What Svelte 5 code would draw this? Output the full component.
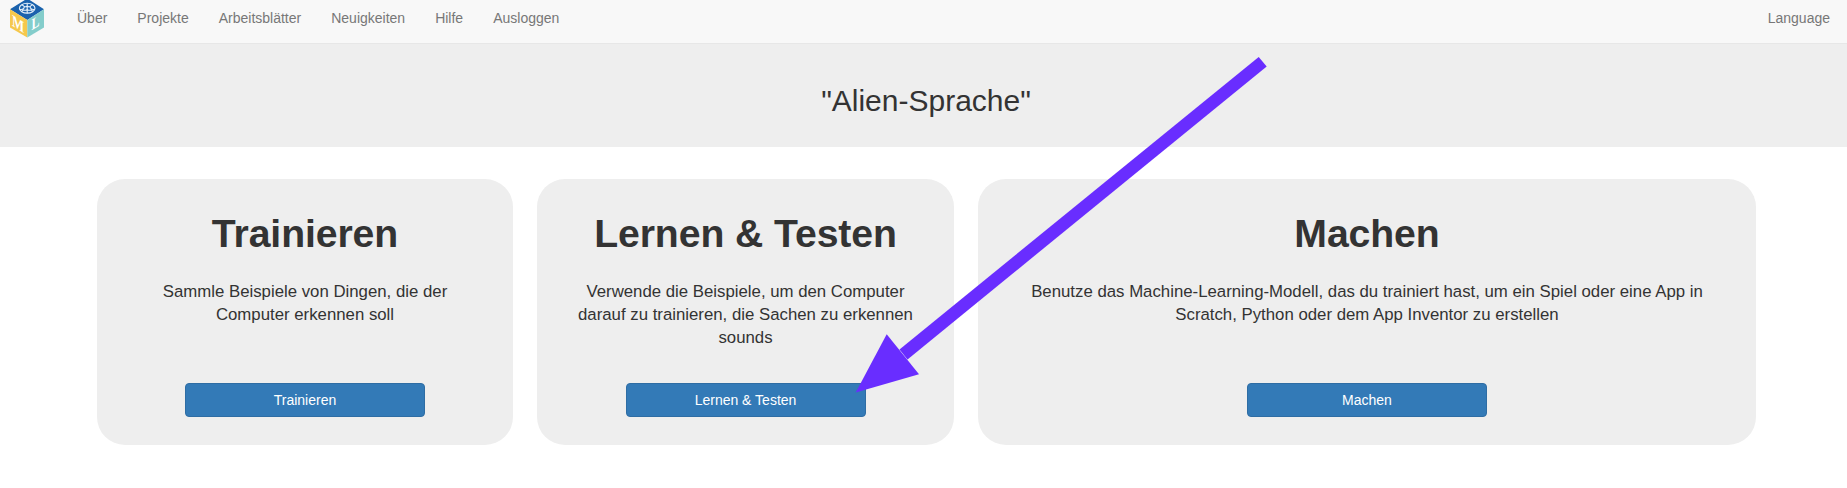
<script>
  const links = ['Über', 'Projekte', 'Arbeitsblätter', 'Neuigkeiten', 'Hilfe', 'Ausloggen'];
  const cards = [
    { title: 'Trainieren', text: 'Sammle Beispiele von Dingen, die der Computer erkennen soll' },
    { title: 'Lernen & Testen', text: 'Verwende die Beispiele, um den Computer darauf zu trainieren, die Sachen zu erkennen sounds' },
    { title: 'Machen', text: 'Benutze das Machine-Learning-Modell, das du trainiert hast, um ein Spiel oder eine App in Scratch, Python oder dem App Inventor zu erstellen' }
  ];
</script>

<div class="page">
  <nav>
    <svg class="logo" width="36" height="40" viewBox="9 -1 36 40" aria-hidden="true">
      <path d="M27.3 -1.5 44 9.3 27.3 20 10 9.3Z" fill="#1b62ad" />
      <path d="M10 9.3 27.3 20V37.4L10 27.5Z" fill="#f5c84c" />
      <path d="M44 9.3 27.3 20V37.4L44 27.5Z" fill="#84cdcb" />
      <g fill="none" stroke="#e3effa" stroke-width="1.1">
        <ellipse cx="27.2" cy="8.2" rx="7.8" ry="4.9" />
        <path d="M27.2 3.2v10M22 5q3 1 2 3t-4.5 1.2M32.4 5q-3 1-2 3t4.5 1.2M22 11.7q0-2 2.5-1.5t2.7-1.6M32.4 11.7q0-2-2.5-1.5t-2.7-1.6M24.3 6.4q1.5.8 2.9-.4 1.4 1.2 2.9.4" />
      </g>
      <text class="letter" transform="matrix(.78 .5 0 1 12 25.6)" font-size="16.5">M</text>
      <text class="letter" transform="matrix(.75 -.45 0 1 31.4 30.2)" font-size="16">L</text>
    </svg>
    <ul>
      {#each links as link}
        <li>{link}</li>
      {/each}
    </ul>
    <span class="language">Language</span>
  </nav>

  <header><h2>"Alien-Sprache"</h2></header>

  <main>
    {#each cards as card}
      <section>
        <h1>{card.title}</h1>
        <p>{card.text}</p>
        <button>{card.title}</button>
      </section>
    {/each}
  </main>

  <svg class="arrow" width="412" height="337" viewBox="855 56 412 337" fill="#692dff" aria-hidden="true">
    <path d="M1258.7 57 1266.7 66.4 907.5 359.4 899.5 349.4Z" />
    <path d="M855.7 392.4 886.7 334.3 919 374.3Z" />
  </svg>
</div>

<style>
  :global(body) {
    background: #fff;
  }
  .page {
    position: relative;
    height: 488px;
    overflow: hidden;
    color: #333;
    font-family: "Liberation Sans", Arial, sans-serif;
    font-size: 14px;
    line-height: 20px;
  }
  nav {
    box-sizing: border-box;
    display: flex;
    align-items: flex-start;
    height: 44px;
    padding: 0 17px 0 9px;
    background: #f8f8f8;
    border-bottom: 1px solid #e7e7e7;
    color: #777;
  }
  .logo {
    flex: none;
    margin-top: -1px;
  }
  .letter {
    fill: #fff;
    font-family: "Liberation Serif", serif;
    font-weight: bold;
  }
  ul {
    display: flex;
    gap: 30px;
    margin: 8px 0 0 32px;
    padding: 0;
    list-style: none;
  }
  .language {
    margin: 8px 0 0 auto;
  }
  header {
    box-sizing: border-box;
    height: 103px;
    padding: 40px 0 0 5px;
    background: #eee;
    text-align: center;
  }
  h2 {
    margin: 0;
    font-size: 30px;
    font-weight: 400;
    line-height: 33px;
  }
  main {
    display: grid;
    grid-template-columns: 416px 417px 778px;
    gap: 24px;
    margin: 32px 0 0 97px;
  }
  section {
    box-sizing: border-box;
    display: flex;
    flex-direction: column;
    align-items: center;
    height: 266px;
    padding: 33px 36px 28px;
    background: #eee;
    border-radius: 28px;
    text-align: center;
  }
  h1 {
    margin: 0;
    font-size: 39.2px;
    line-height: 44px;
    letter-spacing: -0.1px;
  }
  p {
    margin: 23.5px 0 0;
    font-size: 16.8px;
    line-height: 23px;
  }
  button {
    width: 240px;
    height: 34px;
    margin-top: auto;
    padding: 0;
    background: #337ab7;
    border: 1px solid #2e6da4;
    border-radius: 4px;
    color: #fff;
    font: 14px/20px "Liberation Sans", Arial, sans-serif;
  }
  .arrow {
    position: absolute;
    left: 855px;
    top: 56px;
  }
</style>
